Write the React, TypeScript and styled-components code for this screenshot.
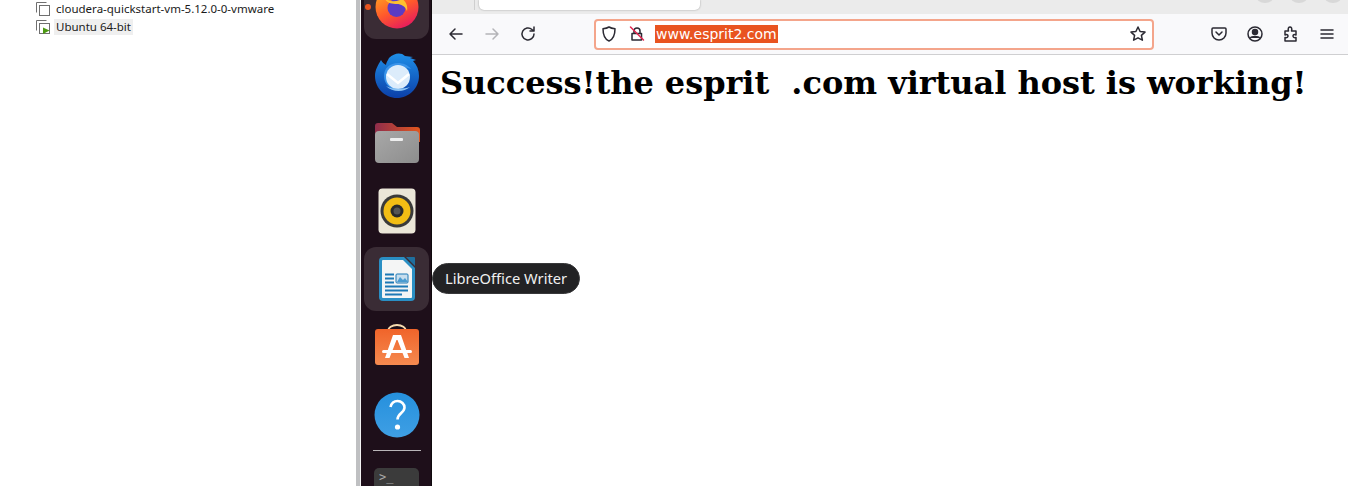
import styled, { createGlobalStyle } from "styled-components";
import type { ReactNode } from "react";

const GlobalStyle = createGlobalStyle`
  html, body {
    margin: 0;
    padding: 0;
    width: 1348px;
    height: 486px;
    overflow: hidden;
    background: #fff;
  }
`;

const Page = styled.div`
  display: flex;
  width: 1348px;
  height: 486px;
  overflow: hidden;
`;

const VmPanel = styled.aside`
  width: 356px;
  flex: none;
  padding: 0 0 0 35px;
  box-sizing: border-box;
  background: #fff;
  font-family: "Noto Sans", "Open Sans", sans-serif;
  font-size: 11.5px;
  color: #1a1a1a;
`;

const VmRow = styled.div`
  display: flex;
  align-items: center;
  height: 18px;
  gap: 4px;
`;

const VmLabel = styled.span<{ $selected?: boolean }>`
  padding: 0 2px;
  margin-left: -1px;
  line-height: 16px;
  white-space: nowrap;
  background: ${(p) => (p.$selected ? "#efefef" : "transparent")};
`;

const Divider = styled.div`
  width: 5px;
  flex: none;
  background: #bfc0c2;
  border-right: 1px solid #f4f4f4;
  box-sizing: border-box;
`;

const Dock = styled.nav`
  position: relative;
  width: 71px;
  flex: none;
  display: flex;
  flex-direction: column;
  align-items: center;
  background: #1e0f1a;
  border-right: 1px solid #0f0a0d;
  box-sizing: border-box;
`;

const DockList = styled.div`
  display: flex;
  flex-direction: column;
  align-items: center;
  margin: -25px 0 0 1px;
`;

const DockSlot = styled.div<{ $active?: boolean }>`
  width: 65px;
  height: 64px;
  margin-bottom: 4px;
  display: flex;
  align-items: center;
  justify-content: center;
  border-radius: 12px;
  background: ${(p) => (p.$active ? "#3a2c35" : "transparent")};
`;

const RunDot = styled.span`
  position: absolute;
  left: 4px;
  top: 4px;
  width: 6px;
  height: 6px;
  border-radius: 50%;
  background: #e95420;
`;

const DockRule = styled.div`
  width: 48px;
  height: 1px;
  margin: -1px 0 17px;
  background: #b9b5b8;
`;

const TerminalTile = styled.div`
  width: 45px;
  height: 44px;
  flex: none;
  padding: 2px 5px;
  box-sizing: border-box;
  border-radius: 5px;
  background: #3b3b3b;
  color: #a8a8a8;
  font-family: "DejaVu Sans Mono", monospace;
  font-size: 12px;
  line-height: 14px;
`;

const Tooltip = styled.div`
  position: absolute;
  left: 71px;
  top: 263px;
  height: 31px;
  padding: 0 12px 2px;
  display: flex;
  align-items: center;
  box-sizing: border-box;
  border-radius: 16px;
  background: #222224;
  border: 1px solid #38383a;
  color: #f0f0f0;
  font-family: "Noto Sans", "Open Sans", sans-serif;
  font-size: 14.7px;
  white-space: nowrap;
  z-index: 2;
`;

const Browser = styled.main`
  flex: 1;
  min-width: 0;
  display: flex;
  flex-direction: column;
  background: #fff;
`;

const TabStrip = styled.div`
  height: 14px;
  flex: none;
  display: flex;
  background: #ebebeb;
  position: relative;
`;

const FirstTabStub = styled.div`
  width: 42px;
  height: 10px;
  flex: none;
  border-right: 1px solid #cfcfcf;
`;

const ActiveTab = styled.div`
  width: 221px;
  height: 10px;
  margin-left: 4px;
  flex: none;
  background: #fff;
  border-radius: 0 0 5px 5px;
  box-shadow: 0 0 2px rgba(0, 0, 0, 0.35);
`;

const WindowDots = styled.div`
  position: absolute;
  top: -11px;
  right: 6px;
  display: flex;
  gap: 16px;
`;

const WindowDot = styled.span`
  width: 18px;
  height: 14px;
  border-radius: 50%;
  background: #d8d8d8;
`;

const Toolbar = styled.div`
  height: 41px;
  flex: none;
  display: flex;
  align-items: center;
  padding: 0 12px 0 14px;
  box-sizing: border-box;
  background: #f9f9fb;
  border-bottom: 1px solid #cfcfd1;
`;

const NavGroup = styled.div`
  display: flex;
  align-items: center;
  gap: 17px;
  width: 148px;
  flex: none;
`;

const UrlBar = styled.div`
  width: 560px;
  height: 31px;
  flex: none;
  display: flex;
  align-items: center;
  padding: 0 5px 0 3px;
  box-sizing: border-box;
  background: #fff;
  border: 2px solid #f4a58b;
  border-radius: 4px;
`;

const LockSlot = styled.span`
  display: flex;
  margin-left: 9px;
`;

const UrlText = styled.span`
  margin-left: 9px;
  padding: 0 1px;
  background: #e95420;
  color: #fff;
  font-family: "DejaVu Sans", sans-serif;
  font-size: 14px;
  line-height: 18px;
`;

const Spacer = styled.div`
  flex: 1;
`;

const ActionGroup = styled.div`
  display: flex;
  align-items: center;
  gap: 17px;
  margin-left: 55px;
`;

const IconButton = styled.span`
  width: 19px;
  height: 19px;
  display: flex;
  align-items: center;
  justify-content: center;
  flex: none;
`;

const Heading = styled.h1`
  margin: 8px 0 0 8px;
  font-family: "DejaVu Serif", serif;
  font-size: 32px;
  letter-spacing: -0.04px;
  font-weight: 700;
  line-height: 40px;
  color: #000;
  white-space: pre;
`;

function Icon({ children, stroke = "#2b2a33" }: { children: ReactNode; stroke?: string }) {
  return (
    <IconButton>
      <svg
        width="18"
        height="18"
        viewBox="0 0 18 18"
        fill="none"
        stroke={stroke}
        strokeWidth="1.5"
        strokeLinecap="round"
        strokeLinejoin="round"
      >
        {children}
      </svg>
    </IconButton>
  );
}

function VmIcon({ running }: { running?: boolean }) {
  return (
    <svg width="16" height="16" viewBox="0 0 16 16" fill="none" stroke="#6f6f6f" strokeWidth="1">
      <path d="M1.5 11.5V1.5H11.5" />
      <rect x="4.5" y="4.5" width="10" height="10" fill="#fff" />
      {running && <path d="M8 8.5 14.5 11.5 8 15Z" fill="#4c9a12" stroke="none" />}
    </svg>
  );
}

function Firefox() {
  return (
    <svg width="44" height="44" viewBox="0 0 44 44">
      <defs>
        <linearGradient id="fx" x1="0.2" y1="0" x2="0.7" y2="1">
          <stop offset="0" stopColor="#ffb21f" />
          <stop offset="0.55" stopColor="#ff5a2b" />
          <stop offset="1" stopColor="#e6195f" />
        </linearGradient>
      </defs>
      <circle cx="22" cy="22" r="21.5" fill="url(#fx)" />
      <circle cx="21.5" cy="23" r="9" fill="#5b3bc4" />
      <path d="M10 14c6 3 11 3 17 0 4 2 6 7 5 12-2-5-6-7-10-7-5 0-10-1-12-5Z" fill="#ffc02e" />
    </svg>
  );
}

function Thunderbird() {
  return (
    <svg width="50" height="50" viewBox="0 0 50 50">
      <defs>
        <linearGradient id="tb" x1="0" y1="0" x2="0" y2="1">
          <stop offset="0" stopColor="#1f8fe8" />
          <stop offset="1" stopColor="#0b3fa8" />
        </linearGradient>
      </defs>
      <path d="M9 10c-3 5-6 10-6 16 0 12 10 22 22 22s22-10 22-22c0-6-2-11-6-15l3-1-6-2 3-1-8-1C29 2 22 3 17 8c-1 2-3 5-3 7-2-1-4-3-5-5Z" fill="url(#tb)" />
      <path d="M12 26c0-8 6-13 14-13 5 0 10 2 13 6-7-3-17-1-19 7-2 6 2 12 9 14-9 1-17-5-17-14Z" fill="#3a94ea" />
      <circle cx="26" cy="27" r="12" fill="#dcecfb" />
      <path d="M15 24l11 9 11-9" fill="none" stroke="#fff" strokeWidth="2.5" />
      <path d="M14 36c6 6 17 7 24 1-6 2-17 3-24-1Z" fill="#8cc4f5" />
    </svg>
  );
}

function Files() {
  return (
    <svg width="46" height="42" viewBox="0 0 46 42">
      <defs>
        <linearGradient id="fl" x1="0" y1="0" x2="1" y2="0">
          <stop offset="0" stopColor="#8f2d4c" />
          <stop offset="1" stopColor="#e2571e" />
        </linearGradient>
        <linearGradient id="fg" x1="0" y1="0" x2="1" y2="1">
          <stop offset="0" stopColor="#a8a8a8" />
          <stop offset="1" stopColor="#8d8d8d" />
        </linearGradient>
      </defs>
      <path d="M1 18V4a3 3 0 0 1 3-3h14l5 4h20a3 3 0 0 1 3 3v12Z" fill="url(#fl)" />
      <rect x="1" y="9" width="44" height="32" rx="4" fill="url(#fg)" />
      <rect x="16" y="16" width="13" height="3" rx="1" fill="#eee" />
    </svg>
  );
}

function Rhythmbox() {
  return (
    <svg width="38" height="46" viewBox="0 0 38 46">
      <rect x="0.5" y="0.5" width="37" height="45" rx="4" fill="#ebe6d8" />
      <circle cx="19" cy="23" r="16.5" fill="#3a3a3a" />
      <circle cx="19" cy="23" r="13.5" fill="#f2bd14" />
      <circle cx="19" cy="23" r="6.5" fill="#2a2a2a" />
      <circle cx="19" cy="23" r="3.5" fill="#555" />
    </svg>
  );
}

function Writer() {
  return (
    <svg width="38" height="46" viewBox="0 0 38 46">
      <path d="M5 1h21l11 11v29a4 4 0 0 1-4 4H5a4 4 0 0 1-4-4V5a4 4 0 0 1 4-4Z" fill="#2a8fc4" />
      <path d="M5 4h20l9 9v28a1 1 0 0 1-1 1H5a1 1 0 0 1-1-1V5a1 1 0 0 1 1-1Z" fill="#f4f5f5" />
      <path d="M28 1h8a1 1 0 0 1 1 1v8Z" fill="#1f6f9e" />
      <rect x="18" y="18" width="12" height="9" rx="1" fill="#c7deee" stroke="#1d79b5" />
      <path d="M19 26l3-5 3 3 2-2 3 4Z" fill="#4b9bd0" />
      <path d="M7 18.5h9M7 22.5h9M7 26.5h9M7 30.5h23M7 34.5h23M7 38.5h17" stroke="#1d79b5" strokeWidth="2" />
    </svg>
  );
}

function AppCenter() {
  return (
    <svg width="46" height="46" viewBox="0 0 46 46">
      <defs>
        <linearGradient id="ac" x1="0" y1="0" x2="0" y2="1">
          <stop offset="0" stopColor="#f0642a" />
          <stop offset="1" stopColor="#f58a50" />
        </linearGradient>
      </defs>
      <path d="M14 7V7a9 6 0 0 1 18 0" fill="none" stroke="#f8dcb0" strokeWidth="2" />
      <rect x="1" y="5" width="44" height="36" rx="3" fill="url(#ac)" />
      <path d="M19 11h8l8 23h-4.500l-7-18h-1l-7 18H11Z" fill="#fff" />
      <path d="M9.500 27.500h27" stroke="#fff" strokeWidth="3" strokeLinecap="round" />
    </svg>
  );
}

function Help() {
  return (
    <svg width="46" height="46" viewBox="0 0 46 46">
      <defs>
        <linearGradient id="hp" x1="0" y1="0" x2="0" y2="1">
          <stop offset="0" stopColor="#2590dd" />
          <stop offset="1" stopColor="#3f9fe4" />
        </linearGradient>
      </defs>
      <circle cx="23" cy="23" r="22.5" fill="url(#hp)" />
      <path d="M16.5 15c1-4 4-6 7-6 4 0 7 3 7 6.5 0 5.5-7 5.5-7 12" fill="none" stroke="#fff" strokeWidth="2.6" />
      <circle cx="23.5" cy="35" r="2.6" fill="#fff" />
    </svg>
  );
}

export default function App() {
  return (
    <Page>
      <GlobalStyle />
      <VmPanel>
        <VmRow>
          <VmIcon />
          <VmLabel>cloudera-quickstart-vm-5.12.0-0-vmware</VmLabel>
        </VmRow>
        <VmRow>
          <VmIcon running />
          <VmLabel $selected>Ubuntu 64-bit</VmLabel>
        </VmRow>
      </VmPanel>
      <Divider />
      <Dock>
        <DockList>
          <DockSlot $active>
            <Firefox />
          </DockSlot>
          <DockSlot>
            <Thunderbird />
          </DockSlot>
          <DockSlot>
            <Files />
          </DockSlot>
          <DockSlot>
            <Rhythmbox />
          </DockSlot>
          <DockSlot $active>
            <Writer />
          </DockSlot>
          <DockSlot>
            <AppCenter />
          </DockSlot>
          <DockSlot>
            <Help />
          </DockSlot>
          <DockRule />
          <TerminalTile>&gt;_</TerminalTile>
        </DockList>
        <RunDot />
        <Tooltip>LibreOffice Writer</Tooltip>
      </Dock>
      <Browser>
        <TabStrip>
          <FirstTabStub />
          <ActiveTab />
          <WindowDots>
            <WindowDot />
            <WindowDot />
            <WindowDot />
          </WindowDots>
        </TabStrip>
        <Toolbar>
          <NavGroup>
            <Icon>
              <path d="M15 9H3M8 4 3 9l5 5" />
            </Icon>
            <Icon stroke="#b4b4b8">
              <path d="M3 9h12M10 4l5 5-5 5" />
            </Icon>
            <Icon>
              <path d="M15 9a6 6 0 1 1-2-4.5L15 6M15 2v4h-4" />
            </Icon>
          </NavGroup>
          <UrlBar>
            <Icon>
              <path d="M9 2c2 1.3 4 1.6 6 1.8 0 6-1.5 10.5-6 12.200C4.500 14.300 3 9.800 3 3.800 5 3.600 7 3.300 9 2Z" />
            </Icon>
            <LockSlot>
              <Icon>
                <path d="M6 8V6a3 3 0 0 1 6 0v2M4 8.500h9.500V15H4Z" />
                <path d="M2.500 2 15.500 15" stroke="#e22850" />
              </Icon>
            </LockSlot>
            <UrlText>www.esprit2.com</UrlText>
            <Spacer />
            <Icon>
              <path d="M9 2l2.100 4.500 4.900.6-3.600 3.300 1 4.800L9 12.800l-4.400 2.400 1-4.800L2 7.100l4.900-.6Z" />
            </Icon>
          </UrlBar>
          <ActionGroup>
            <Icon>
              <path d="M3 3h12a1 1 0 0 1 1 1v4a7 7 0 0 1-14 0V4a1 1 0 0 1 1-1Z" />
              <path d="M6 7l3 3 3-3" />
            </Icon>
            <Icon>
              <circle cx="9" cy="9" r="7" />
              <circle cx="9" cy="7" r="2.500" fill="#2b2a33" />
              <path d="M4.500 13c1-2 8-2 9 0" fill="#2b2a33" />
            </Icon>
            <Icon>
              <path d="M3 6h3.500C5.500 3 7 2 8 2s2.500 1 1.500 4H14v4c-2-1-3 0-3 1s1 2 3 1.500V16H3v-3.500c2 .5 3-.5 3-1.500S5 9 3 10Z" />
            </Icon>
            <Icon>
              <path d="M3 5h12M3 9h12M3 13h12" />
            </Icon>
          </ActionGroup>
        </Toolbar>
        <Heading>Success!the esprit  .com virtual host is working!</Heading>
      </Browser>
    </Page>
  );
}
